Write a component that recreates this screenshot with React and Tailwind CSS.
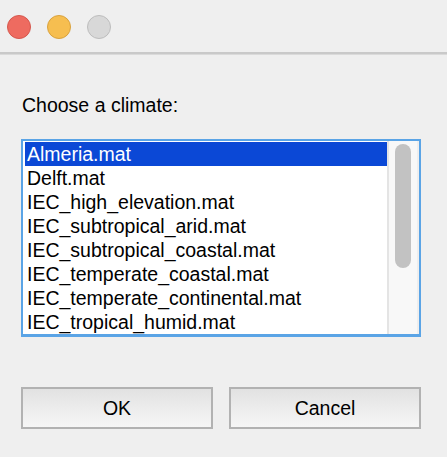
import React from "react";

const items = [
  "Almeria.mat",
  "Delft.mat",
  "IEC_high_elevation.mat",
  "IEC_subtropical_arid.mat",
  "IEC_subtropical_coastal.mat",
  "IEC_temperate_coastal.mat",
  "IEC_temperate_continental.mat",
  "IEC_tropical_humid.mat",
];

export default function App() {
  return (
    <div
      className="w-[447px] h-[457px] bg-[#efefef] flex flex-col overflow-hidden text-black"
      style={{ fontFamily: '"Liberation Sans", Arial, Helvetica, sans-serif' }}
    >
      {/* Title bar */}
      <div className="h-[52px] flex items-center pl-[7px] gap-[16px] pt-[1px] shrink-0">
        <div className="w-[24px] h-[24px] rounded-full bg-[#ee6b60] border border-[#d5584e]" />
        <div className="w-[24px] h-[24px] rounded-full bg-[#f6be50] border border-[#d9a23e]" />
        <div className="w-[24px] h-[24px] rounded-full bg-[#d8d8d8] border border-[#bdbdbd]" />
      </div>
      <div className="h-[2px] bg-[#c9c9c9] shrink-0" />
      <div className="h-[1px] bg-[#dadada] shrink-0" />

      {/* Content */}
      <div className="flex flex-col pl-[21px] pr-[26px]">
        <div className="mt-[39px] text-[19.5px] leading-[22px] pl-[1px]">Choose a climate:</div>

        <div className="mt-[23px] h-[198px] border-2 border-[#5aa4e6] border-b-[3px] bg-white flex">
          <div className="flex-1 pt-[1px] pl-[2px]">
            {items.map((it, i) => (
              <div
                key={it}
                className={
                  "h-[24px] leading-[25px] text-[19.5px] pl-[2px] whitespace-nowrap " +
                  (i === 0 ? "bg-[#0b48d6] text-white" : "text-black")
                }
              >
                {it}
              </div>
            ))}
          </div>
          <div className="w-[32px] bg-[#f8f8f8] border-l-2 border-l-[#e4e4e4] border-r-2 border-r-[#eeeeee] pt-[3px] pl-[6px]">
            <div className="w-[16px] h-[124px] rounded-full bg-[#c2c2c2]" />
          </div>
        </div>

        <div className="mt-[50px] flex gap-[16px]">
          <button className="w-[192px] h-[42px] border-2 border-[#b2b2b2] bg-gradient-to-b from-[#e2e2e2] to-[#f6f6f6] text-[19.5px] leading-[22px] text-black">
            OK
          </button>
          <button className="w-[192px] h-[42px] border-2 border-[#b2b2b2] bg-gradient-to-b from-[#e2e2e2] to-[#f6f6f6] text-[19.5px] leading-[22px] text-black">
            Cancel
          </button>
        </div>
      </div>
    </div>
  );
}
